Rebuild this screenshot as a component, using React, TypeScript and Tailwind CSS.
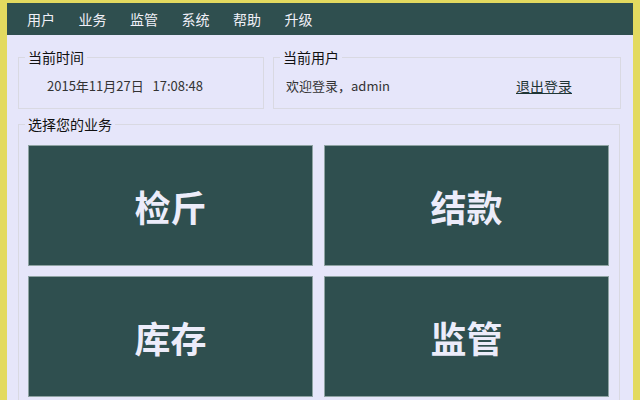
import React from "react";

const font = { fontFamily: '"Microsoft YaHei", "Noto Sans CJK SC", sans-serif' };

export default function App() {
  const nav = ["用户", "业务", "监管", "系统", "帮助", "升级"];
  const tiles = ["检斤", "结款", "库存", "监管"];
  return (
    <div className="w-[640px] h-[400px] overflow-hidden bg-[#e3da5f] pt-[3px] px-[7px]" style={font}>
      <div className="h-[420px] bg-[#e6e6fa] flex flex-col">
        <div className="h-[32px] shrink-0 bg-[#2f4f4f] flex items-center pl-[20px] gap-[23.5px] text-[14px] text-[#f0f0f8]">
          {nav.map((n) => (
            <span key={n} className="leading-none">{n}</span>
          ))}
        </div>
        <div className="flex shrink-0 gap-[9px] ml-[11px] mr-[12px] mt-[14px]">
          <fieldset className="w-[246px] h-[60px] border border-[#d9d9e2] pl-[6px]">
            <legend className="px-[3px] text-[14px] leading-[16px] text-[#111]">当前时间</legend>
            <div className="pl-[22px] pt-[13px] text-[13px] leading-[16px] text-[#333]">
              2015年11月27日&nbsp;&nbsp;&nbsp;17:08:48
            </div>
          </fieldset>
          <fieldset className="flex-1 h-[60px] border border-[#d9d9e2] pl-[6px]">
            <legend className="px-[3px] text-[14px] leading-[16px] text-[#111]">当前用户</legend>
            <div className="flex pl-[6px] pr-[48px] pt-[13px] text-[13px] leading-[16px] text-[#333]">
              <span>欢迎登录，admin</span>
              <span className="ml-auto underline text-[14px] text-[#1f3535]">退出登录</span>
            </div>
          </fieldset>
        </div>
        <fieldset className="ml-[11px] mr-[13px] mt-[7px] h-[320px] shrink-0 border border-[#d9d9e2] pl-[6px] pr-[10px]">
          <legend className="px-[3px] text-[14px] leading-[16px] text-[#111]">选择您的业务</legend>
          <div className="grid grid-cols-2 gap-x-[11px] gap-y-[10px] pl-[3px] pt-[13px]">
            {tiles.map((t) => (
              <div
                key={t}
                className="h-[121px] bg-[#2f4f4f] border border-[#8fa3a3] flex items-center justify-center text-[36px] font-bold text-[#ececfa]"
              >
                {t}
              </div>
            ))}
          </div>
        </fieldset>
      </div>
    </div>
  );
}
